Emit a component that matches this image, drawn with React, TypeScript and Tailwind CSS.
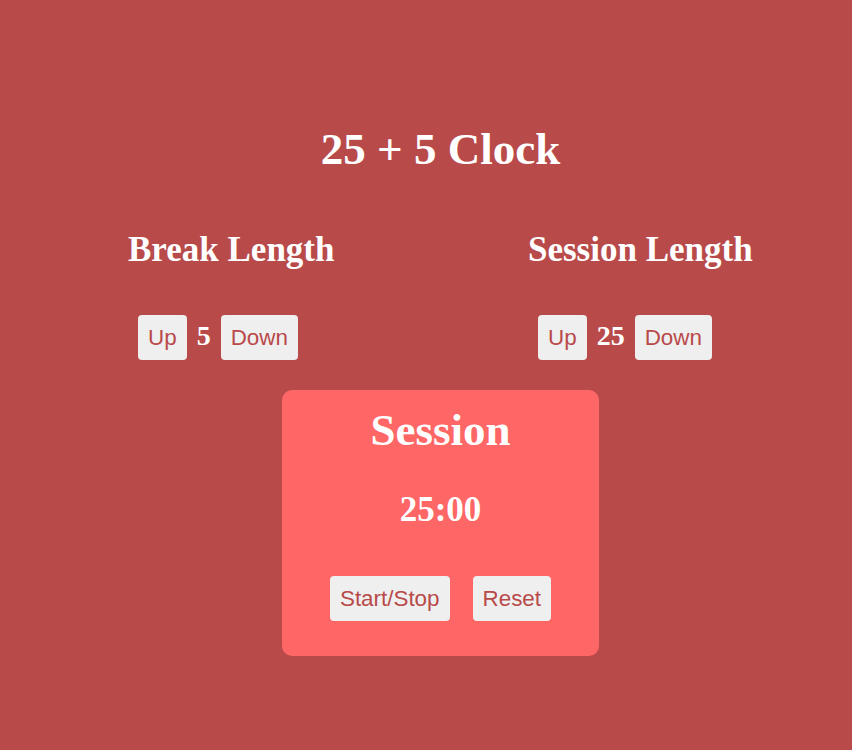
const serif = { fontFamily: '"Liberation Serif", "Times New Roman", serif' };
const sans = { fontFamily: '"Liberation Sans", Arial, sans-serif' };

const btn =
  "bg-[#efefef] text-[#b94a4a] rounded-[4px] text-[22.4px] leading-[25px] py-[10px] px-[10px]";

const LengthControl = ({ title, value, wide }: { title: string; value: number; wide?: boolean }) => (
  <div className={wide ? "w-[400px] shrink-0" : "flex-1"}>
    <h2 className="text-[35px] font-bold text-white leading-[1.15]">{title}</h2>
    <div className="flex items-baseline gap-[10px] pl-[10px] mt-[45px]">
      <button className={btn} style={sans}>Up</button>
      <span className="text-[28px] font-bold text-white">{value}</span>
      <button className={btn} style={sans}>Down</button>
    </div>
  </div>
);

export default function App() {
  return (
    <div className="min-h-screen w-full bg-[#b94a4a] overflow-hidden" style={serif}>
      {/* Title */}
      <div className="pl-[29px] pt-[124px] text-center">
        <h1 className="text-[45px] font-bold text-white leading-[1.15]">25 + 5 Clock</h1>
      </div>

      {/* Length controls */}
      <div className="flex pl-[128px] mt-[54px]">
        <LengthControl title="Break Length" value={5} wide />
        <LengthControl title="Session Length" value={25} />
      </div>

      {/* Timer card */}
      <div className="pl-[29px] mt-[30px] flex justify-center">
        <div className="w-[317px] h-[266px] bg-[#ff6666] rounded-[10px] flex flex-col items-center pt-[15px]">
          <h2 className="text-[45px] font-bold text-white leading-[1.15]">Session</h2>
          <div className="text-[35px] font-bold text-white leading-[1.15] mt-[33px]">25:00</div>
          <div className="flex gap-[23px] mt-[46px]" style={sans}>
            <button className={btn}>Start/Stop</button>
            <button className={btn}>Reset</button>
          </div>
        </div>
      </div>
    </div>
  );
}
